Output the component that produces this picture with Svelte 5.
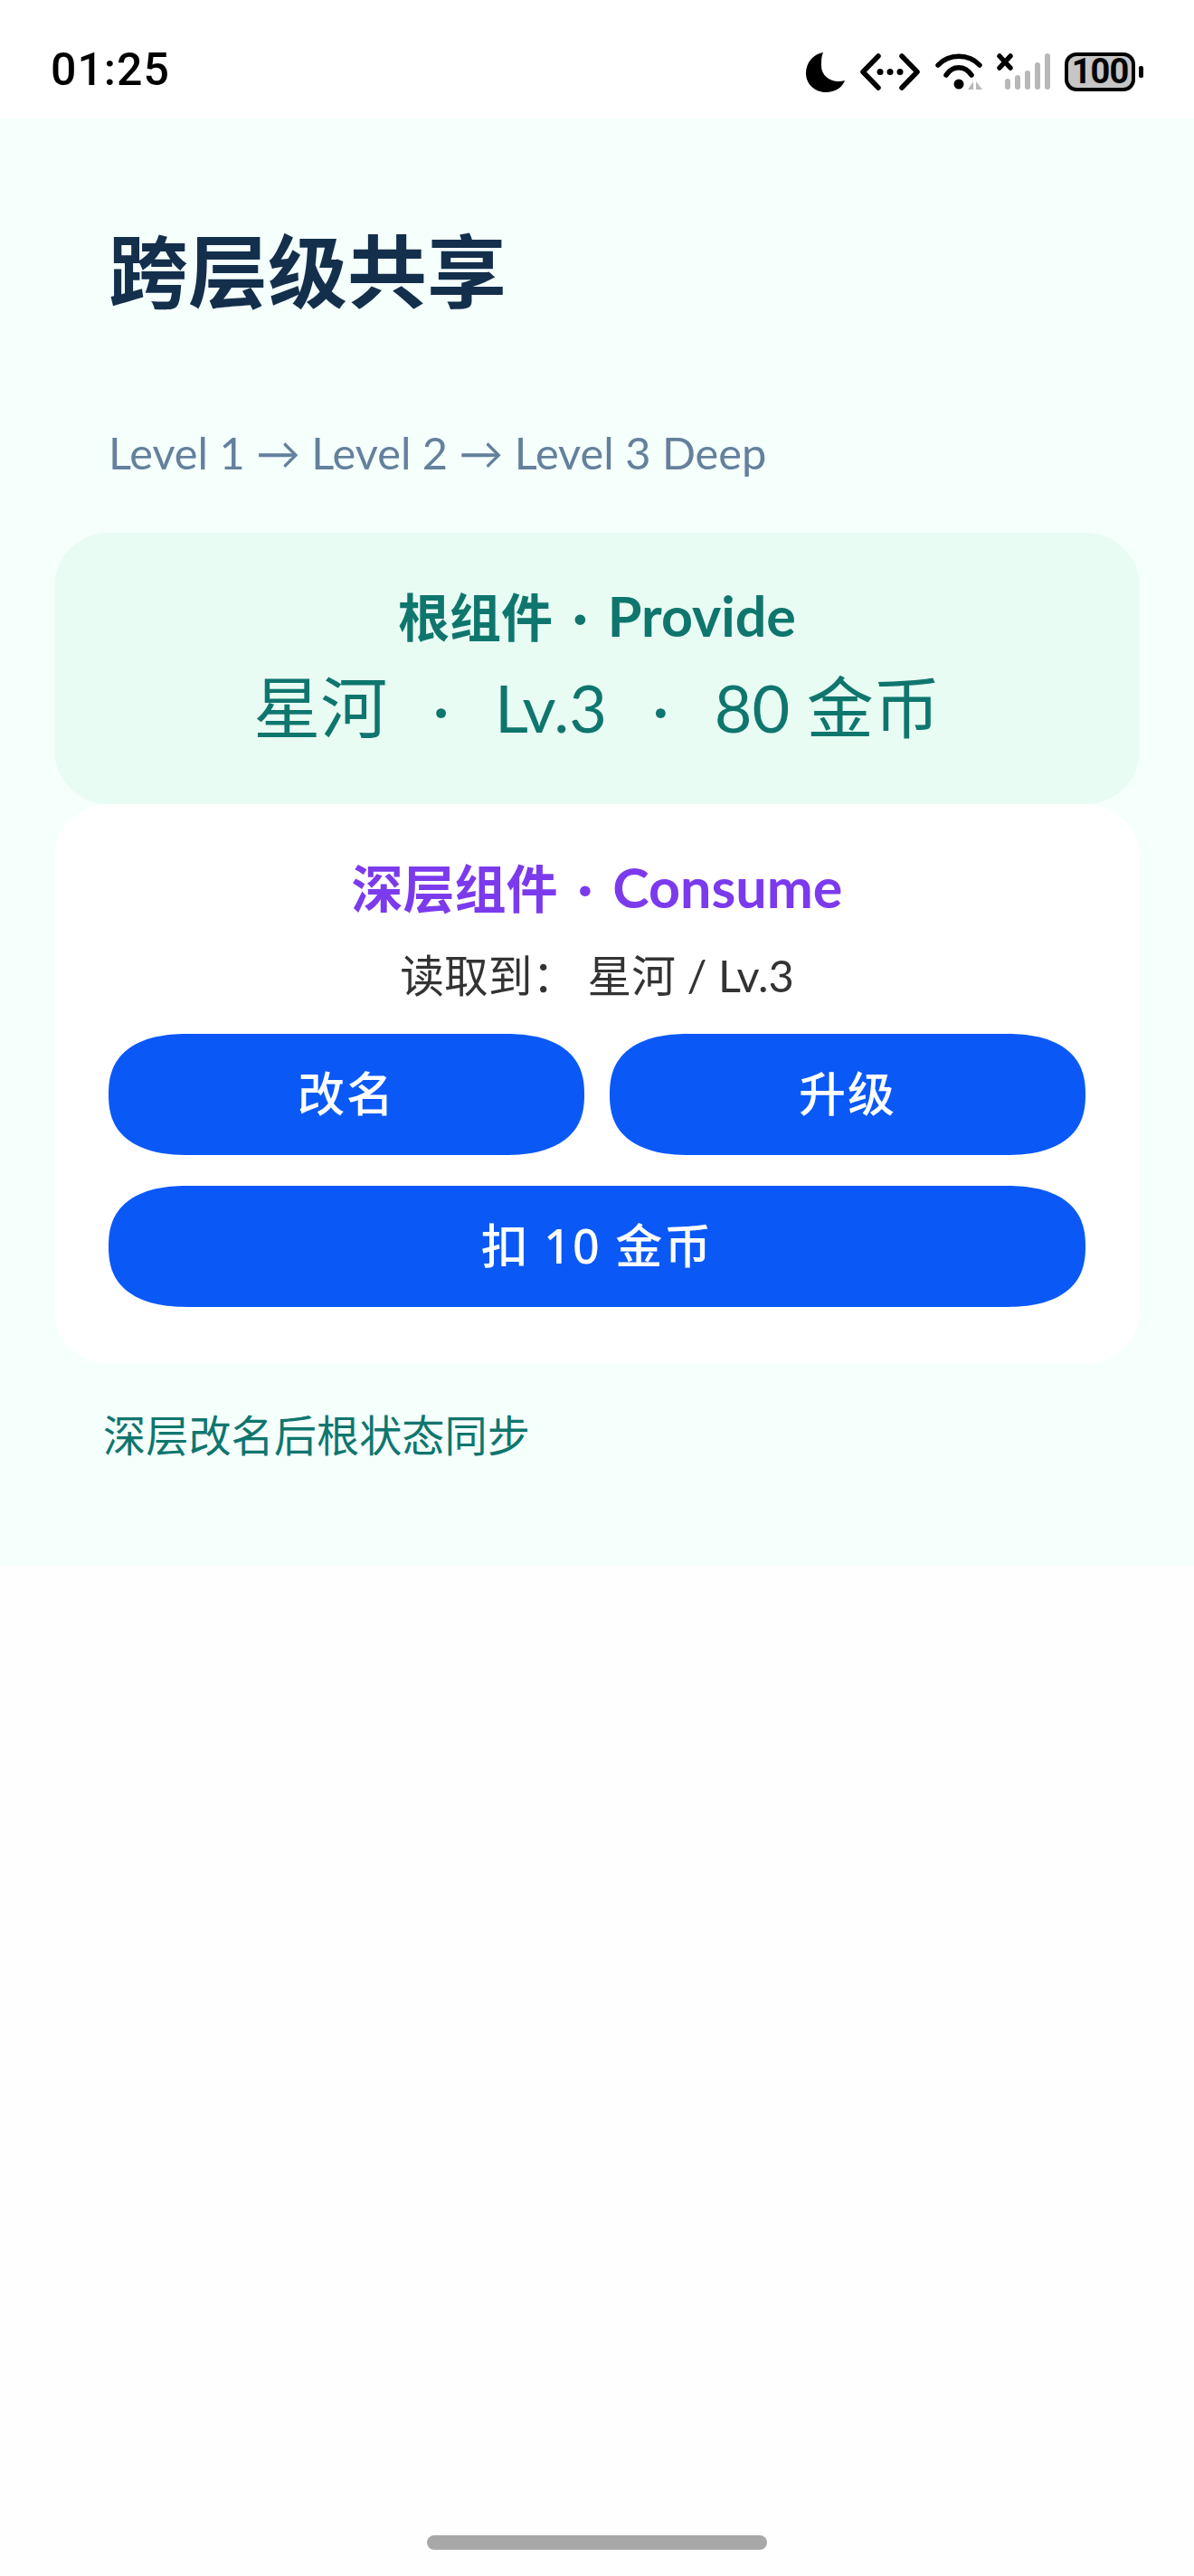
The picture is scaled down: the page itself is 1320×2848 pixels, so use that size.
<script>
  const bars = [
    { x: 9, y: 29 },
    { x: 20, y: 25 },
    { x: 31, y: 20 },
    { x: 42, y: 11 },
    { x: 53, y: 1 }
  ];
</script>

<div class="screen">
  <header class="status">
    <span class="time">01:25</span>
    <div class="icons">
      <svg class="moon" viewBox="0 0 43 45" aria-hidden="true"><path d="M19 1C8 3 0 12 0 24c0 12 10 21 22 21 10 0 18-5 21-13-13 4-26-4-26-16 0-6 0-11 2-15Z" /></svg>
      <svg class="code" viewBox="0 0 66 41" aria-hidden="true">
        <path d="M20 3 3 20.500 20 38M46 3l17 17.500L46 38" />
        <circle cx="22" cy="20.500" r="3.500" /><circle cx="33" cy="20.500" r="3.500" /><circle cx="44" cy="20.500" r="3.500" />
      </svg>
      <svg class="wifi" viewBox="0 0 54 42" aria-hidden="true">
        <path class="arc" d="M3 14C15 1 37 1 49 14M12 25c7-11 21-11 28 0" />
        <circle cx="26" cy="35" r="5.500" />
        <path class="arrows" d="M42 32v9h-6ZM45 32v9h7Z" />
      </svg>
      <svg class="signal" viewBox="0 0 60 42" aria-hidden="true">
        <path class="cross" d="M3 4l12 13M15 4 3 17" />
        {#each bars as b}
          <rect x={b.x} y={b.y} width="6" height={41 - b.y} rx="3" />
        {/each}
      </svg>
      <div class="battery">
        <div class="cell">100</div>
        <div class="nub"></div>
      </div>
    </div>
  </header>

  <main class="page">
    <h1>跨层级共享</h1>
    <p class="sub">Level 1 → Level 2 → Level 3 Deep</p>

    <section class="card root">
      <h2><span class="cjk">根组件</span><span class="sep">·</span>Provide</h2>
      <p class="value"><span class="big">星河</span><span class="sep">·</span>Lv.3<span class="sep">·</span>80 <span class="big">金币</span></p>
    </section>

    <section class="card deep">
      <h2><span class="cjk">深层组件</span><span class="sep">·</span>Consume</h2>
      <p class="read">读取到： 星河 / Lv.3</p>
      <div class="row">
        <button>改名</button>
        <button>升级</button>
      </div>
      <button class="wide">扣 10 金币</button>
    </section>

    <p class="note">深层改名后根状态同步</p>
  </main>

  <div class="home"></div>
</div>

<style>
  :global(body) {
    margin: 0;
    background: #fefefe;
  }
  .screen {
    position: relative;
    height: 2848px;
    font-family: "Lato", "Noto Sans CJK SC", sans-serif;
    overflow: hidden;
  }
  .status {
    height: 131px;
    background: #ffffff;
    display: flex;
    align-items: center;
    justify-content: space-between;
    padding: 23px 56px 0;
    box-sizing: border-box;
  }
  .time {
    font-family: "Roboto", sans-serif;
    font-size: 50px;
    font-weight: 500;
    color: #000;
    letter-spacing: 1px;
  }
  .icons {
    display: flex;
    align-items: center;
    margin-top: 4px;
  }
  .icons svg {
    display: block;
  }
  .moon {
    width: 43px;
    height: 45px;
  }
  .code {
    width: 66px;
    height: 41px;
    margin-left: 17px;
  }
  .code path,
  .arc,
  .cross {
    fill: none;
    stroke: #000;
    stroke-width: 5.500px;
    stroke-linecap: round;
    stroke-linejoin: round;
  }
  .wifi {
    width: 54px;
    height: 42px;
    margin-left: 17px;
  }
  .arrows {
    fill: #b8b8b8;
  }
  .signal {
    width: 60px;
    height: 42px;
    margin-left: 14px;
    fill: #b8b8b8;
  }
  .battery {
    display: flex;
    align-items: center;
    margin-left: 15px;
  }
  .cell {
    width: 78px;
    height: 43px;
    box-sizing: border-box;
    border: 4px solid #000;
    border-radius: 13px;
    background: #c6c6c6;
    color: #000;
    font-family: "Roboto", sans-serif;
    font-weight: 700;
    font-size: 38px;
    letter-spacing: -1px;
    line-height: 35px;
    text-align: center;
  }
  .nub {
    width: 5px;
    height: 13px;
    margin-left: 4px;
    border-radius: 2px;
    background: #000;
  }
  .page {
    height: 1600px;
    box-sizing: border-box;
    background: #f5fffc;
    padding: 109px 60px 0;
  }
  h1 {
    margin: 0 0 0 60px;
    font-size: 88px;
    line-height: 110px;
    font-weight: 700;
    color: #132f4c;
    font-family: "Noto Sans CJK SC", sans-serif;
  }
  .sub {
    margin: 118px 0 0 60px;
    font-size: 48.700px;
    line-height: 64px;
    color: #64809c;
  }
  .card {
    border-radius: 60px;
    text-align: center;
    box-sizing: border-box;
  }
  .root {
    margin-top: 57px;
    height: 300px;
    padding-top: 59px;
    background: #e8fcf3;
    color: #0f766e;
  }
  h2 {
    margin: 0;
    font-size: 61px;
    line-height: 66px;
    font-weight: 700;
  }
  .cjk {
    font-size: 57px;
  }
  .sep {
    margin: 0 50px;
  }
  h2 .sep {
    margin: 0 22px;
  }
  .value {
    margin: 24px 0 0;
    font-size: 72px;
    line-height: 86px;
  }
  .big {
    font-size: 74px;
  }
  .deep {
    height: 619px;
    padding: 59px 60px 0;
    background: #ffffff;
  }
  .deep h2 {
    color: #7c3aed;
  }
  .read {
    margin: 32px 0 0;
    font-size: 48.700px;
    line-height: 62px;
    color: #333;
  }
  .row {
    display: flex;
    gap: 28px;
    margin-top: 34px;
  }
  button {
    flex: 1;
    height: 134px;
    border: 0;
    border-radius: 90px / 67px;
    corner-shape: superellipse(1.3);
    background: #0a59f7;
    color: #fff;
    font-family: "Noto Sans", "Noto Sans CJK SC", sans-serif;
    font-size: 52px;
    font-weight: 500;
    letter-spacing: 2px;
    padding: 0 0 8px;
  }
  .wide {
    display: block;
    width: 100%;
    margin-top: 34px;
  }
  .note {
    margin: 49px 0 0 54px;
    font-size: 47.200px;
    line-height: 56px;
    color: #0f766e;
    font-family: "Noto Sans CJK SC", sans-serif;
  }
  .home {
    position: absolute;
    left: 472px;
    bottom: 29px;
    width: 376px;
    height: 16px;
    border-radius: 8px;
    background: #a8a8a8;
  }
</style>
